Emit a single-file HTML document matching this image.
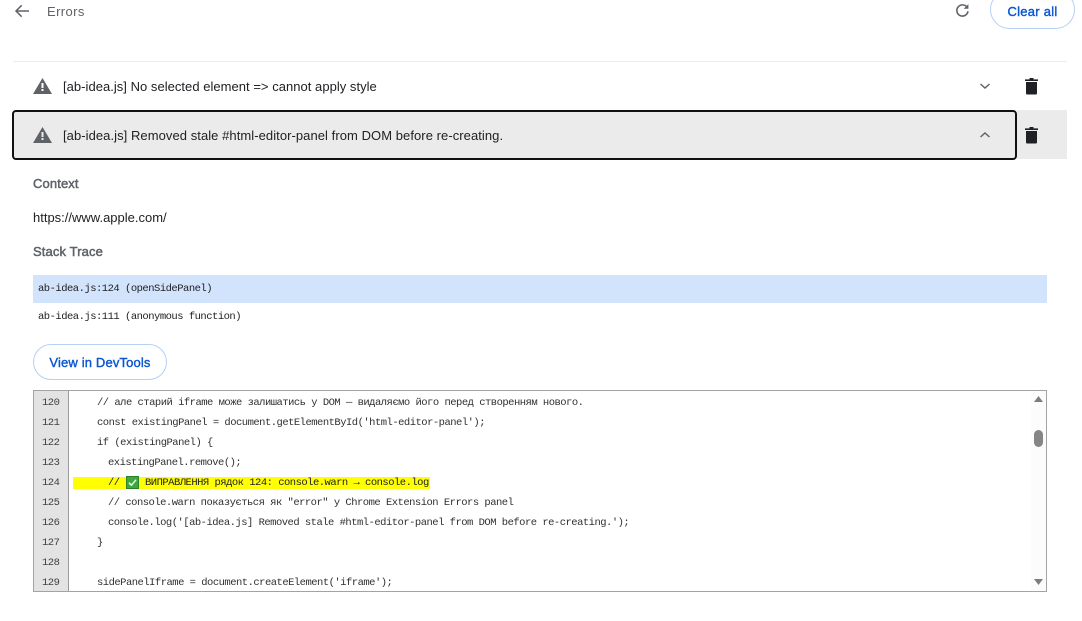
<!DOCTYPE html>
<html lang="uk">
<head>
<meta charset="utf-8">
<title>Errors</title>
<style>
html,body{margin:0;padding:0;width:1082px;height:621px;overflow:hidden;background:#fff}
body{position:relative;font-family:"Liberation Sans",sans-serif}
.a{position:absolute;white-space:nowrap}
svg{position:absolute;display:block}
.t{font-size:13px;line-height:16px;color:#202124}
.h{font-size:13px;line-height:16px;color:#5f6368;-webkit-text-stroke:.5px #5f6368;letter-spacing:.12px}
.m{font-family:"Liberation Mono",monospace;font-size:10.5px;letter-spacing:-.5px;line-height:14px;color:#202124}
.c{position:absolute;white-space:pre;font-family:"Liberation Mono",monospace;font-size:10.5px;letter-spacing:-.51px;line-height:14px;color:#303030}
.l{position:absolute;white-space:pre;font-family:"Liberation Mono",monospace;font-size:10.5px;letter-spacing:-.5px;line-height:14px;color:#404040;left:8px}
.btn{position:absolute;box-sizing:border-box;border:1px solid #b6cff5;background:#fff;color:#0b57d0;font-size:13px;text-align:center;-webkit-text-stroke:.4px #0b57d0}
</style>
</head>
<body>
<svg style="left:14px;top:3px" width="16" height="16" viewBox="0 0 16 16"><path d="M15 8H2M7.700 2.300 2 8 7.700 13.700" fill="none" stroke="#5f6368" stroke-width="1.500"/></svg>
<div class="a" style="left:47px;top:4px;font-size:13px;line-height:16px;color:#5f6368;letter-spacing:.4px">Errors</div>

<svg style="left:955px;top:3px" width="15" height="15" viewBox="0 0 15 15"><path d="M12 4.200A5.600 5.600 0 1 0 13 8.300" fill="none" stroke="#5f6368" stroke-width="1.600"/><path d="M8.700 5.800H13.400V1.100Z" fill="#5f6368"/></svg>
<div class="btn" style="left:990px;top:-10px;width:85px;height:39px;border-radius:20px;line-height:41px;letter-spacing:.25px">Clear all</div>

<div class="a" style="left:13px;top:61px;width:1054px;height:1px;background:#ececec"></div>

<svg style="left:33px;top:78px" width="19" height="16" viewBox="0 0 19 16"><path d="M9.500 0 19 16H0Z" fill="#5f6368"/><rect x="8.500" y="5" width="2" height="5" fill="#fff"/><rect x="8.500" y="11" width="2" height="2" fill="#fff"/></svg>
<div class="a t" style="left:63px;top:79px;letter-spacing:.03px">[ab-idea.js] No selected element =&gt; cannot apply style</div>
<svg style="left:979px;top:82px" width="12" height="8" viewBox="0 0 12 8"><path d="M1.500 2 6 6 10.500 2" fill="none" stroke="#5f6368" stroke-width="1.500"/></svg>
<svg style="left:1025px;top:78px" width="13" height="17" viewBox="0 0 13 17"><path d="M4.500 0H8.500V1.400H13V3H0V1.400H4.500ZM1 4H12V15.400Q12 16.500 10.900 16.500H2.100Q1 16.500 1 15.400Z" fill="#202124"/></svg>

<div class="a" style="left:1017px;top:110px;width:50px;height:49px;background:#ebebeb"></div>
<div class="a" style="left:12px;top:110px;width:1005px;height:50px;box-sizing:border-box;background:#ebebeb;border:2px solid #111;border-radius:4px"></div>
<svg style="left:33px;top:127px" width="19" height="16" viewBox="0 0 19 16"><path d="M9.500 0 19 16H0Z" fill="#5f6368"/><rect x="8.500" y="5" width="2" height="5" fill="#ebebeb"/><rect x="8.500" y="11" width="2" height="2" fill="#ebebeb"/></svg>
<div class="a t" style="left:63px;top:128px;letter-spacing:.06px">[ab-idea.js] Removed stale #html-editor-panel from DOM before re-creating.</div>
<svg style="left:979px;top:131px" width="12" height="8" viewBox="0 0 12 8"><path d="M1.500 6 6 2 10.500 6" fill="none" stroke="#5f6368" stroke-width="1.500"/></svg>
<svg style="left:1025px;top:127px" width="13" height="17" viewBox="0 0 13 17"><path d="M4.500 0H8.500V1.400H13V3H0V1.400H4.500ZM1 4H12V15.400Q12 16.500 10.900 16.500H2.100Q1 16.500 1 15.400Z" fill="#202124"/></svg>

<div class="a h" style="left:33px;top:176px">Context</div>
<div class="a t" style="left:33px;top:210px">https://www.apple.com/</div>
<div class="a h" style="left:33px;top:244px">Stack Trace</div>

<div class="a" style="left:33px;top:275px;width:1014px;height:28px;background:#d2e3fc"></div>
<div class="a m" style="left:38px;top:282px">ab-idea.js:124 (openSidePanel)</div>
<div class="a m" style="left:38px;top:310px">ab-idea.js:111 (anonymous function)</div>

<div class="btn" style="left:33px;top:344px;width:134px;height:36px;border-radius:18px;line-height:35px;letter-spacing:.15px">View in DevTools</div>

<div class="a" style="left:33px;top:390px;width:1014px;height:202px;box-sizing:border-box;border:1px solid #a3a3a3;overflow:hidden;background:#fff">
  <div style="position:absolute;left:0;top:0;width:34px;height:200px;background:#e3e3e3;border-right:1px solid #9a9a9a"></div>
  <div style="position:absolute;left:39px;top:86px;width:357px;height:12px;background:#ffff00"></div>
  <div style="position:absolute;right:0;top:0;width:15px;height:200px;background:#fcfcfc"></div>

  <div class="l" style="top:5px">120</div>
  <div class="l" style="top:25px">121</div>
  <div class="l" style="top:45px">122</div>
  <div class="l" style="top:65px">123</div>
  <div class="l" style="top:85px">124</div>
  <div class="l" style="top:105px">125</div>
  <div class="l" style="top:125px">126</div>
  <div class="l" style="top:145px">127</div>
  <div class="l" style="top:165px">128</div>
  <div class="l" style="top:185px">129</div>

  <div class="c" style="left:63px;top:5px">// але старий iframe може залишатись у DOM — видаляємо його перед створенням нового.</div>
  <div class="c" style="left:63px;top:25px">const existingPanel = document.getElementById('html-editor-panel');</div>
  <div class="c" style="left:63px;top:45px">if (existingPanel) {</div>
  <div class="c" style="left:74px;top:65px">existingPanel.remove();</div>
  <div class="c" style="left:74px;top:85px;color:#222">//</div>
  <svg style="left:92px;top:85px" width="13" height="13" viewBox="0 0 13 13"><rect x=".5" y=".5" width="12" height="12" fill="#3fa73f" stroke="#2c7f2c"/><path d="M3 6.800 5.400 9.200 10 3.800" fill="none" stroke="#e8ffe8" stroke-width="1.500"/></svg>
  <div class="c" style="left:111px;top:85px;color:#222">ВИПРАВЛЕННЯ рядок 124: console.warn → console.log</div>
  <div class="c" style="left:74px;top:105px">// console.warn показується як "error" у Chrome Extension Errors panel</div>
  <div class="c" style="left:74px;top:125px">console.log('[ab-idea.js] Removed stale #html-editor-panel from DOM before re-creating.');</div>
  <div class="c" style="left:63px;top:145px">}</div>
  <div class="c" style="left:63px;top:185px">sidePanelIframe = document.createElement('iframe');</div>

  <svg style="left:999px;top:5px" width="11" height="7" viewBox="0 0 11 7"><path d="M5.500 0 10 6H1Z" fill="#7d7d7d"/></svg>
  <div style="position:absolute;left:1000px;top:39px;width:9px;height:17px;border-radius:5px;background:#858585"></div>
  <svg style="left:999px;top:187px" width="11" height="7" viewBox="0 0 11 7"><path d="M1 1H10L5.500 7Z" fill="#7d7d7d"/></svg>
</div>
</body>
</html>
